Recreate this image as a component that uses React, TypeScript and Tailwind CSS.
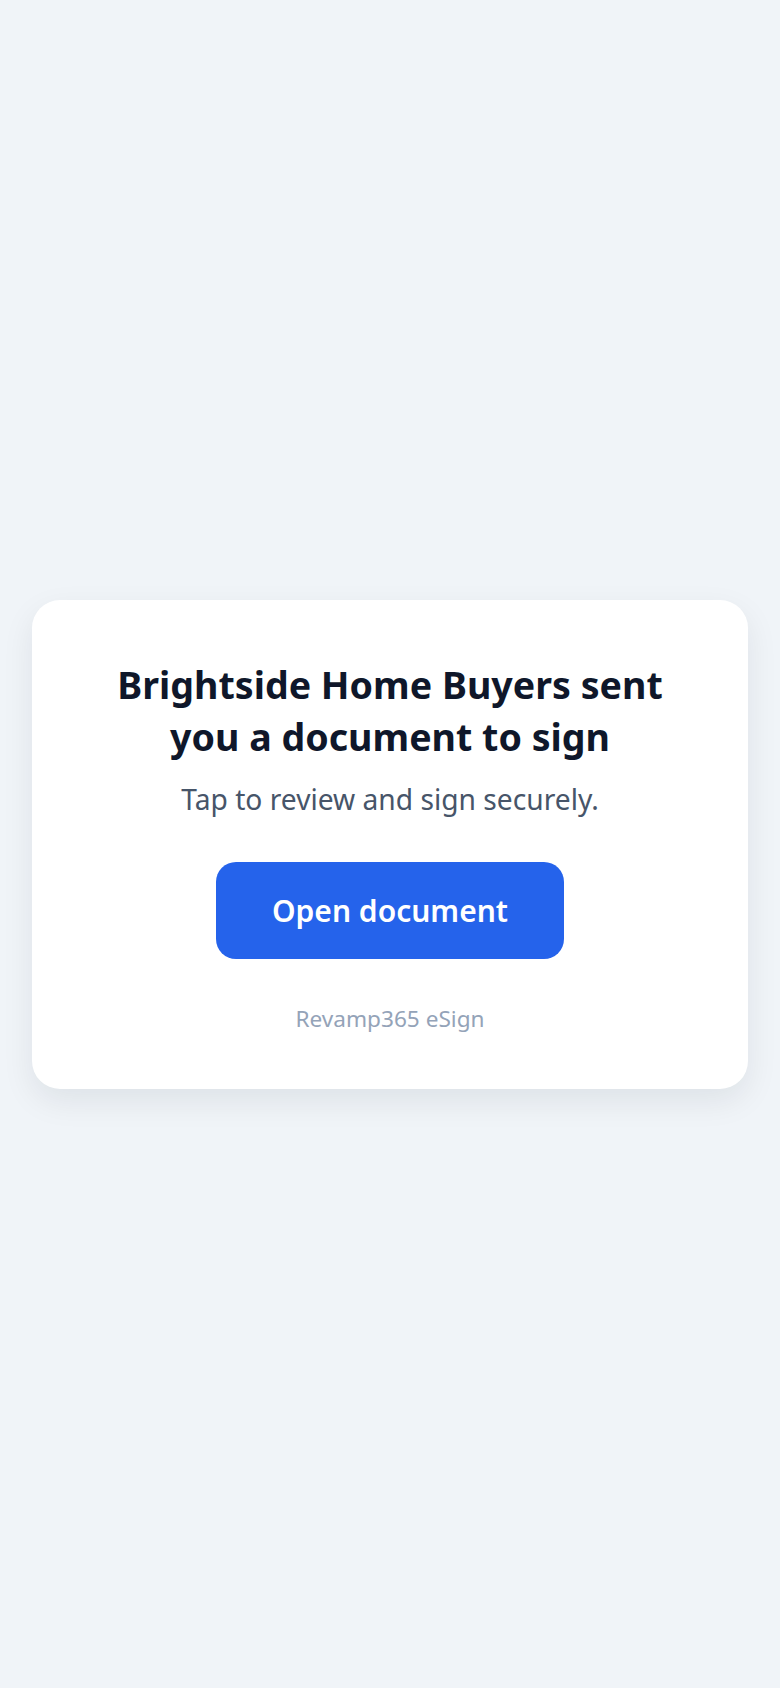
import React from "react";

export default function App() {
  return (
    <div
      className="min-h-screen w-full bg-[#f0f4f8] flex items-center justify-center px-8"
      style={{ fontFamily: '"Noto Sans", "Open Sans", sans-serif' }}
    >
      <div className="w-full bg-white rounded-[28px] shadow-[0_12px_32px_rgba(15,23,42,0.08)] px-14 pt-[59px] pb-[54px] flex flex-col items-center text-center">
        <h1 className="text-[37.6px] leading-[52px] font-bold text-[#0f172a]">
          Brightside Home Buyers sent you a document to sign
        </h1>
        <p className="mt-[17px] text-[28.2px] leading-[38px] text-[#475569]">
          Tap to review and sign securely.
        </p>
        <button className="mt-[44px] w-[348px] h-[97px] rounded-[20px] bg-[#2563eb] text-white text-[30px] font-semibold">
          Open document
        </button>
        <p className="mt-[44px] text-[22.6px] leading-[32px] text-[#94a3b8]">
          Revamp365 eSign
        </p>
      </div>
    </div>
  );
}
